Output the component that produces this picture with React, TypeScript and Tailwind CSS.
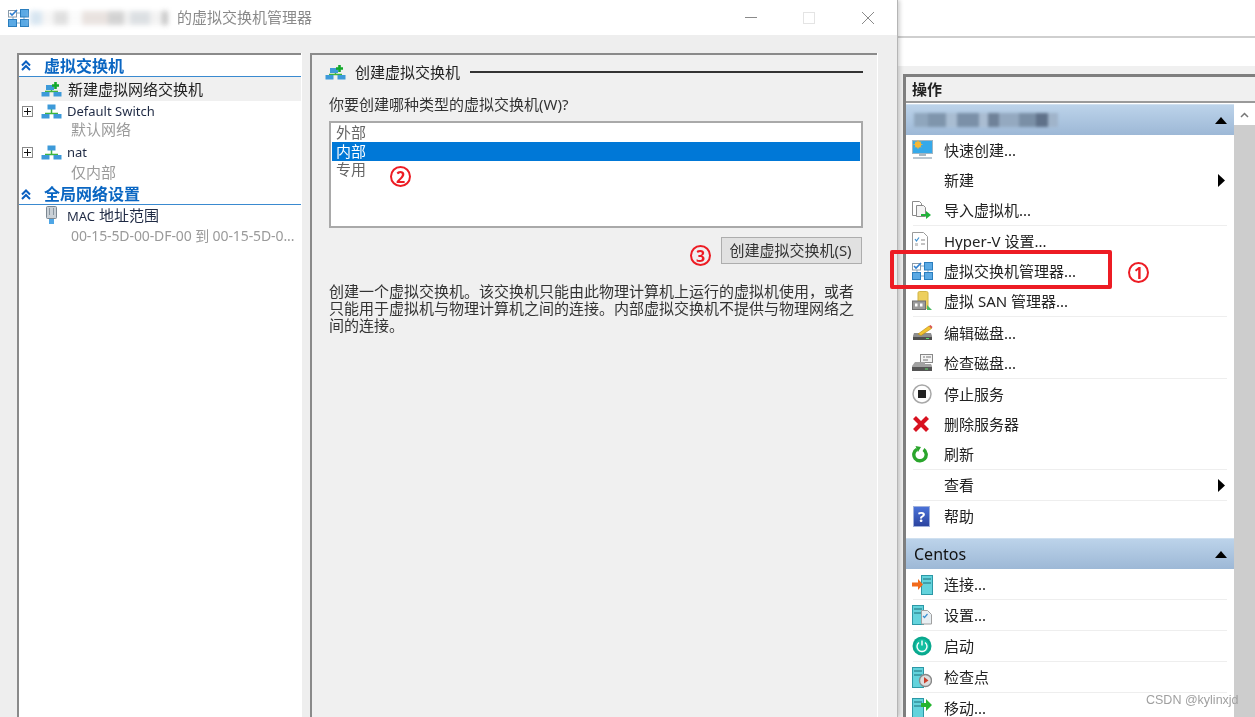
import React from "react";

const Mgr = () => (
  <svg width="21" height="18" viewBox="0 0 21 18">
    <path d="M9 4h3M5 8v2M16 8v2M9 14h3" stroke="#7fa9c9" strokeWidth="1" />
    <rect x="0.500" y="1.500" width="8" height="6.500" fill="#fff" stroke="#8a9aa8" />
    <path d="M2 4l2 2 5-5" fill="none" stroke="#2f7fd0" strokeWidth="1.600" />
    <rect x="12.500" y="0.500" width="8" height="7.500" fill="#5aa9e4" stroke="#2a7dbd" />
    <rect x="0.500" y="10.500" width="8" height="7" fill="#5aa9e4" stroke="#2a7dbd" />
    <rect x="12.500" y="10.500" width="8" height="7" fill="#5aa9e4" stroke="#2a7dbd" />
  </svg>
);

const Net = ({ plus }: { plus?: boolean }) => (
  <svg width="21" height="15" viewBox="0 0 21 15">
    <path d="M10.500 5v5M4 9.500h13" stroke="#3fb53f" strokeWidth="1.500" fill="none" />
    <rect x={plus ? 5 : 6.500} y={plus ? 3 : 0.500} width="8" height="5" fill="#3d9ad9" />
    <rect x="0.500" y="10" width="8" height="4.500" fill="#3d9ad9" />
    <rect x="12.500" y="10" width="8" height="4.500" fill="#3d9ad9" />
    {plus && <path d="M14.500 0v7M11 3.500h7" stroke="#12a82a" strokeWidth="2.600" />}
  </svg>
);

const Plus = () => (
  <span className="w-[11px] h-[11px] border border-[#8a8a8a] flex items-center justify-center shrink-0">
    <svg width="9" height="9" viewBox="0 0 9 9">
      <path d="M4.500 1v7M1 4.500h7" stroke="#111" strokeWidth="1" />
    </svg>
  </span>
);

const Chev = () => (
  <svg width="12" height="11" viewBox="0 0 12 11">
    <path d="M2 5.500l4-4 4 4M2 10l4-4 4 4" fill="none" stroke="#0a5fc0" strokeWidth="2" />
  </svg>
);

const Server = ({ x = 0, w = 11, y = 1, h = 19 }: { x?: number; w?: number; y?: number; h?: number }) => (
  <g>
    <rect x={x + 0.500} y={y + 0.500} width={w} height={h} fill="#63d3dc" stroke="#2c98a6" />
    <path d={`M${x + 2} ${y + 4}h${w - 3}M${x + 2} ${y + 8}h${w - 3}`} stroke="#1d6f7a" strokeWidth="1" />
  </g>
);

const icons: Record<string, React.ReactNode> = {
  quick: (
    <svg width="21" height="20" viewBox="0 0 21 20">
      <rect x="0.500" y="0.500" width="20" height="13" fill="#35a9ea" stroke="#9fb6c4" />
      <circle cx="6" cy="4.500" r="3.200" fill="#f7b733" />
      <path d="M6 0v9M1.500 4.500h9M3 1.500l6 6M9 1.500l-6 6" stroke="#f7b733" strokeWidth="0.800" />
      <rect x="7" y="14" width="7" height="2" fill="#aab8c2" />
      <rect x="1" y="17" width="19" height="2" fill="#b9c6d0" />
    </svg>
  ),
  imp: (
    <svg width="20" height="20" viewBox="0 0 20 20">
      <path d="M0.500 1.500h7l2 2v12h-9z" fill="#fff" stroke="#8a8a8a" />
      <path d="M4.500 5.500h7l2 2v9h-9z" fill="#f4f4f4" stroke="#8a8a8a" />
      <path d="M9 14h5v-3l5 4-5 4v-3H9z" fill="#22b33a" />
    </svg>
  ),
  doc: (
    <svg width="16" height="19" viewBox="0 0 16 19">
      <path d="M0.500 0.500h11l4 4v14h-15z" fill="#fff" stroke="#9a9a9a" />
      <path d="M3 7l1.500 2L7 5.500" fill="none" stroke="#3c8fd0" strokeWidth="1.200" />
      <path d="M9 8h4M9 12h4" stroke="#888" />
      <rect x="3" y="11" width="3" height="3" fill="#ccc" />
    </svg>
  ),
  mgr: <Mgr />,
  san: (
    <svg width="21" height="20" viewBox="0 0 21 20">
      <rect x="6" y="0.500" width="10" height="17" rx="1.500" fill="#edcf5e" stroke="#d2b445" />
      <rect x="0.500" y="10" width="13" height="8.500" fill="#9a9a9a" stroke="#6f6f6f" />
      <rect x="3" y="12.500" width="2.500" height="3" fill="#fff" />
      <rect x="8" y="12.500" width="2.500" height="3" fill="#fff" />
      <path d="M15 14l5 5h-5z" fill="#4cb860" />
    </svg>
  ),
  edit: (
    <svg width="21" height="16" viewBox="0 0 21 16">
      <path d="M2 8h17l1 3v4H1v-4z" fill="#8e8e8e" />
      <rect x="1" y="12" width="19" height="3" fill="#4e4e4e" />
      <rect x="14" y="13" width="3" height="1" fill="#5fdc6a" />
      <path d="M6 9L17 1l2.500 2.500L9 10.500z" fill="#f2c230" stroke="#b98a10" strokeWidth="0.600" />
      <path d="M17 1l2.500 2.500 1-1.500L18.500 0z" fill="#d9534f" />
    </svg>
  ),
  check: (
    <svg width="21" height="18" viewBox="0 0 21 18">
      <rect x="8.500" y="0.500" width="12" height="8" fill="#f4f4f4" stroke="#888" />
      <path d="M11 3h2M14 3h5M11 6h5" stroke="#777" />
      <path d="M3 8h10v2h6l1 2v5H0v-5z" fill="#a2a2a2" />
      <rect x="0" y="13" width="20" height="4" fill="#555" />
      <rect x="13" y="14.500" width="3" height="1" fill="#5fdc6a" />
    </svg>
  ),
  stop: (
    <svg width="20" height="20" viewBox="0 0 20 20">
      <circle cx="10" cy="10" r="9" fill="#fff" stroke="#a8a8a8" strokeWidth="1.500" />
      <rect x="6" y="6" width="8" height="8" fill="#222" />
    </svg>
  ),
  del: (
    <svg width="18" height="18" viewBox="0 0 18 18">
      <path d="M2.500 2.500l13 13M15.500 2.500l-13 13" stroke="#d8111f" strokeWidth="4.200" />
    </svg>
  ),
  refresh: (
    <svg width="17" height="17" viewBox="0 0 17 17">
      <path d="M11.500 3.500A6.200 6.200 0 1 1 5 3.200" fill="none" stroke="#2aa52c" strokeWidth="3.400" />
      <path d="M3.500 0l5.500 1-3 5z" fill="#2aa52c" />
    </svg>
  ),
  help: (
    <span className="w-[17px] h-[21px] ml-[1px] bg-gradient-to-b from-[#4a72d8] to-[#2c44a0] border border-[#9fb0dc] flex items-center justify-center text-white font-bold text-[15px] leading-none">?</span>
  ),
  connect: (
    <svg width="21" height="21" viewBox="0 0 21 21">
      <Server x={9} w={11} />
      <path d="M0 8.500h6V5l5 5.500-5 5.500v-3.500H0z" fill="#f26a1b" />
    </svg>
  ),
  settings: (
    <svg width="20" height="20" viewBox="0 0 20 20">
      <Server x={0} w={11} y={0} h={19} />
      <path d="M9.500 5.500h6l4 4v9.500h-10z" fill="#e8eef2" stroke="#a0a0a0" />
      <path d="M11 11l1.500 1.500 3-3.500" fill="none" stroke="#3c8fd0" strokeWidth="1.200" />
    </svg>
  ),
  start: (
    <svg width="20" height="20" viewBox="0 0 20 20">
      <circle cx="10" cy="10" r="9.500" fill="#0aa88e" />
      <circle cx="10" cy="10" r="7" fill="#14bfa2" />
      <path d="M7 6.500a5 5 0 1 0 6 0M10 4.500v5" fill="none" stroke="#fff" strokeWidth="1.400" />
    </svg>
  ),
  point: (
    <svg width="20" height="21" viewBox="0 0 20 21">
      <Server x={0} w={11} y={0} h={20} />
      <circle cx="13.500" cy="13.500" r="6" fill="#ddd" stroke="#888" strokeWidth="1.400" />
      <path d="M12 10l4.500 3.500-4.500 3z" fill="#c9402a" />
    </svg>
  ),
  move: (
    <svg width="20" height="21" viewBox="0 0 20 21">
      <Server x={0} w={11} y={0} h={20} />
      <path d="M9 5h5V1l6 6-6 6V9H9z" fill="#25b52f" />
    </svg>
  ),
};

const Row = ({ icon, label, arrow }: { icon?: string; label: string; arrow?: boolean }) => (
  <div className="h-[30px] flex items-center relative">
    <span className="w-[38px] pl-[6px] flex items-center justify-start shrink-0">{icon ? icons[icon] : null}</span>
    <span className="text-[15px] text-[#222] leading-none">{label}</span>
    {arrow && (
      <svg className="ml-auto mr-[9px]" width="7" height="13" viewBox="0 0 7 13">
        <path d="M0 0l7 6.500L0 13z" fill="#000" />
      </svg>
    )}
  </div>
);

const Sep = ({ extra }: { extra?: boolean }) => (
  <div className={extra ? "h-[1px] mb-[1px] mx-[7px] bg-[#eeeeee]" : "h-[1px] mx-[7px] bg-[#eeeeee]"} />
);

const BlueHead = ({ children, className }: { children: React.ReactNode; className?: string }) => (
  <div className={`h-[31px] bg-gradient-to-b from-[#bcd3ea] to-[#9db8d6] flex items-center pl-[8px] pr-[7px] border-t border-[#cfe0f0] ${className ?? ""}`}>
    {children}
    <svg className="ml-auto" width="12" height="7" viewBox="0 0 12 7">
      <path d="M6 0l6 7H0z" fill="#000" />
    </svg>
  </div>
);

const Circled = ({ n, className }: { n: string; className: string }) => (
  <div className={`absolute w-[21px] h-[21px] rounded-full border-2 border-[#ed1c24] text-[#ed1c24] font-bold text-[16px] leading-none flex items-center justify-center ${className}`}>
    {n}
  </div>
);

const Mosaic = ({ c, w, h = "h-[14px]" }: { c: string; w: string; h?: string }) => <span className={`${w} ${h} ${c} block`} />;

export default function App() {
  return (
    <div className="w-[1255px] h-[717px] overflow-hidden relative flex bg-white blur-[0.35px] font-['Noto_Sans','Noto_Sans_CJK_SC',sans-serif] text-[#222]">
      {/* Dialog */}
      <div className="w-[898px] h-full flex flex-col shrink-0 border-r border-[#b5b5b5] shadow-[2px_0_4px_rgba(0,0,0,0.18)] z-10">
        <div className="h-[35px] bg-white flex items-center pl-[8px] shrink-0">
          <Mgr />
          <div className="w-[147px] h-[18px] flex items-center ml-[1px] blur-[2.500px] opacity-80">
            <Mosaic c="bg-[#cfe0ee]" w="w-[12px]" />
            <Mosaic c="bg-[#f4f4f4]" w="w-[12px]" />
            <Mosaic c="bg-[#d8d8d8]" w="w-[14px]" />
            <Mosaic c="bg-[#fafafa]" w="w-[14px]" />
            <Mosaic c="bg-[#e4dcd8]" w="w-[26px]" />
            <Mosaic c="bg-[#c8c8c8]" w="w-[16px]" />
            <Mosaic c="bg-[#f0f0f0]" w="w-[6px]" />
            <Mosaic c="bg-[#d4d8dc]" w="w-[20px]" />
            <Mosaic c="bg-[#f0f0f0]" w="w-[12px]" />
            <Mosaic c="bg-[#b8b8b8]" w="w-[6px]" />
          </div>
          <span className="text-[15px] text-[#8a8a8a] leading-none">的虚拟交换机管理器</span>
          <div className="ml-auto flex items-center mr-[23px]">
            <span className="w-[12px] h-[1px] bg-[#8a8a8a]" />
            <span className="w-[12px] h-[12px] border border-[#e4e4e4] ml-[46px]" />
            <svg className="ml-[47px]" width="12" height="12" viewBox="0 0 12 12">
              <path d="M0 0l12 12M12 0L0 12" stroke="#8a8a8a" strokeWidth="1" />
            </svg>
          </div>
        </div>
        <div className="flex-1 bg-[#eeeeee] flex gap-[9px] pl-[17px] pt-[18px] min-h-0">
          {/* Tree */}
          <div className="w-[284px] bg-white border-t-2 border-l-2 border-[#8a8a8a] shadow-[1px_0_0_#ffffff] overflow-hidden">
            <div className="h-[21px] flex items-center pl-[1px] border-b border-[#3a8ad0] box-content">
              <span className="w-[22px] flex justify-start"><Chev /></span>
              <span className="text-[16px] font-bold text-[#0a66c2] leading-none ml-[2px]">虚拟交换机</span>
            </div>
            <div className="h-[24px] bg-[#f0f0f0] flex items-center pl-[22px]">
              <Net plus />
              <span className="text-[15px] ml-[6px] leading-none">新建虚拟网络交换机</span>
            </div>
            <div className="h-[20px] flex items-center pl-[3px]">
              <Plus />
              <span className="ml-[8px]"><Net /></span>
              <span className="text-[13px] ml-[5px] leading-none text-[#1f2a44]">Default Switch</span>
            </div>
            <div className="h-[21px] flex items-start pt-[1px] pl-[52px] text-[15px] leading-none text-[#9a9a9a]">默认网络</div>
            <div className="h-[21px] flex items-center pl-[3px]">
              <Plus />
              <span className="ml-[8px]"><Net /></span>
              <span className="text-[13px] ml-[5px] leading-none text-[#1f2a44]">nat</span>
            </div>
            <div className="h-[21px] flex items-center pb-[2px] pl-[52px] text-[15px] leading-none text-[#9a9a9a]">仅内部</div>
            <div className="h-[20px] flex items-center pl-[1px] border-b border-[#3a8ad0] box-content">
              <span className="w-[22px] flex justify-start"><Chev /></span>
              <span className="text-[16px] font-bold text-[#0a66c2] leading-none ml-[2px]">全局网络设置</span>
            </div>
            <div className="h-[21px] flex items-center pl-[27px]">
              <svg width="11" height="19" viewBox="0 0 11 19">
                <rect x="0.500" y="0.500" width="10" height="12" rx="1" fill="#c9d0d6" stroke="#7b8791" />
                <path d="M3.500 2v7M7.500 2v7" stroke="#8a96a0" />
                <rect x="3" y="13" width="5" height="5" fill="#4ea6e6" />
              </svg>
              <span className="text-[15px] ml-[10px] leading-none text-[#1f2a44]">
                <span className="text-[13px]">MAC</span> 地址范围
              </span>
            </div>
            <div className="h-[19px] flex items-center pl-[52px] text-[14px] tracking-[-0.1px] leading-none text-[#9a9a9a] whitespace-nowrap">
              00-15-5D-00-DF-00 到 00-15-5D-0...
            </div>
          </div>
          {/* Center */}
          <div className="w-[567px] bg-[#f0f0f0] border-t-2 border-l-2 border-[#8a8a8a] border-r-0 pl-[17px] pr-[14px] shadow-[1px_0_0_#ffffff]">
            <div className="h-[34px] flex items-center -ml-[4px]">
              <Net plus />
              <span className="text-[15px] ml-[9px] leading-none">创建虚拟交换机</span>
              <span className="flex-1 h-[2px] bg-[#333] ml-[10px]" />
            </div>
            <div className="text-[15px] leading-none mt-[8px] h-[19px] text-[#333]">你要创建哪种类型的虚拟交换机(W)?</div>
            <div className="h-[107px] mt-[5px] bg-white border-2 border-[#a9a9a9] px-[1px] flex flex-col">
              <div className="h-[19px] pl-[4px] text-[15px] leading-[18px] text-[#666]">外部</div>
              <div className="h-[19px] pl-[4px] text-[15px] leading-[19px] text-white bg-[#0078d7]">内部</div>
              <div className="h-[19px] pl-[4px] text-[15px] leading-[16px] text-[#666]">专用</div>
            </div>
            <div className="flex justify-end mt-[9px]">
              <div className="w-[141px] h-[27px] mr-[1px] pr-[2px] bg-[#e1e1e1] border border-[#adadad] flex items-center justify-center text-[15px] leading-none text-[#333]">
                创建虚拟交换机(S)
              </div>
            </div>
            <p className="text-[15px] leading-[17px] mt-[19px] text-[#333] w-[534px] [line-break:anywhere]">
              创建一个虚拟交换机。该交换机只能由此物理计算机上运行的虚拟机使用，或者只能用于虚拟机与物理计算机之间的连接。内部虚拟交换机不提供与物理网络之间的连接。
            </p>
          </div>
        </div>
      </div>
      {/* Right */}
      <div className="flex-1 min-w-0 flex flex-col">
        <div className="h-[36px] bg-white border-b-2 border-[#cfcfcf] box-content shrink-0" />
        <div className="h-[28px] bg-white shrink-0" />
        <div className="flex-1 bg-[#f0f0f0] pt-[8px] pl-[5px] min-h-0">
          <div className="h-full border-t-[3px] border-l-[3px] border-[#7f7f7f] bg-white flex flex-col overflow-hidden">
            <div className="h-[24px] bg-[#f0f0f0] border-b-2 border-[#9a9a9a] box-content flex items-center pl-[6px] text-[15px] font-bold leading-none shrink-0">
              操作
            </div>
            <div className="flex flex-1 min-h-0 mt-[1px]">
              <div className="w-[328px] shrink-0">
                <BlueHead>
                  <div className="flex items-center h-[18px] blur-[1.500px]">
                    <Mosaic c="bg-[#8fa6bd]" w="w-[14px]" />
                    <Mosaic c="bg-[#7f95ac]" w="w-[18px]" />
                    <Mosaic c="bg-[#a9bdd2]" w="w-[11px]" />
                    <Mosaic c="bg-[#7b90a8]" w="w-[22px]" />
                    <Mosaic c="bg-[#aabdd2]" w="w-[9px]" />
                    <Mosaic c="bg-[#6f8299]" w="w-[11px]" />
                    <Mosaic c="bg-[#94a9c0]" w="w-[20px]" />
                    <Mosaic c="bg-[#7a8fa6]" w="w-[17px]" />
                    <Mosaic c="bg-[#5f7189]" w="w-[12px]" />
                    <Mosaic c="bg-[#a0b4ca]" w="w-[10px]" />
                  </div>
                </BlueHead>
                <Row icon="quick" label="快速创建..." />
                <Row label="新建" arrow />
                <Row icon="imp" label="导入虚拟机..." />
                <Sep />
                <Row icon="doc" label="Hyper-V 设置..." />
                <Row icon="mgr" label="虚拟交换机管理器..." />
                <Row icon="san" label="虚拟 SAN 管理器..." />
                <Sep extra />
                <Row icon="edit" label="编辑磁盘..." />
                <Row icon="check" label="检查磁盘..." />
                <Sep />
                <Row icon="stop" label="停止服务" />
                <Row icon="del" label="删除服务器" />
                <Row icon="refresh" label="刷新" />
                <Sep />
                <Row label="查看" arrow />
                <Sep />
                <Row icon="help" label="帮助" />
                <BlueHead className="mt-[7px]">
                  <span className="text-[16px] leading-none text-[#111]">Centos</span>
                </BlueHead>
                <Row icon="connect" label="连接..." />
                <Sep />
                <Row icon="settings" label="设置..." />
                <Sep />
                <Row icon="start" label="启动" />
                <Sep />
                <Row icon="point" label="检查点" />
                <Sep />
                <Row icon="move" label="移动..." />
              </div>
              <div className="flex-1 flex flex-col bg-[#cdcdcd]">
                <div className="h-[21px] bg-white flex items-center justify-center">
                  <svg width="9" height="6" viewBox="0 0 9 6">
                    <path d="M1 5l3.500-3.500L8 5" fill="none" stroke="#777" strokeWidth="1.500" />
                  </svg>
                </div>
              </div>
            </div>
          </div>
        </div>
      </div>

      {/* Annotations */}
      <div className="absolute left-[890px] top-[250px] w-[222px] h-[39px] border-[4px] border-[#ed1c24] rounded-[2px] z-20" />
      <Circled n="1" className="left-[1128px] top-[262px] z-20" />
      <Circled n="2" className="left-[390px] top-[166px] z-20" />
      <Circled n="3" className="left-[690px] top-[245px] z-20" />
      <div className="absolute left-[1146px] top-[692px] text-[12.500px] leading-[16px] text-[#a0a0a0] z-20 font-['Liberation_Sans',sans-serif]">CSDN @kylinxjd</div>
    </div>
  );
}
